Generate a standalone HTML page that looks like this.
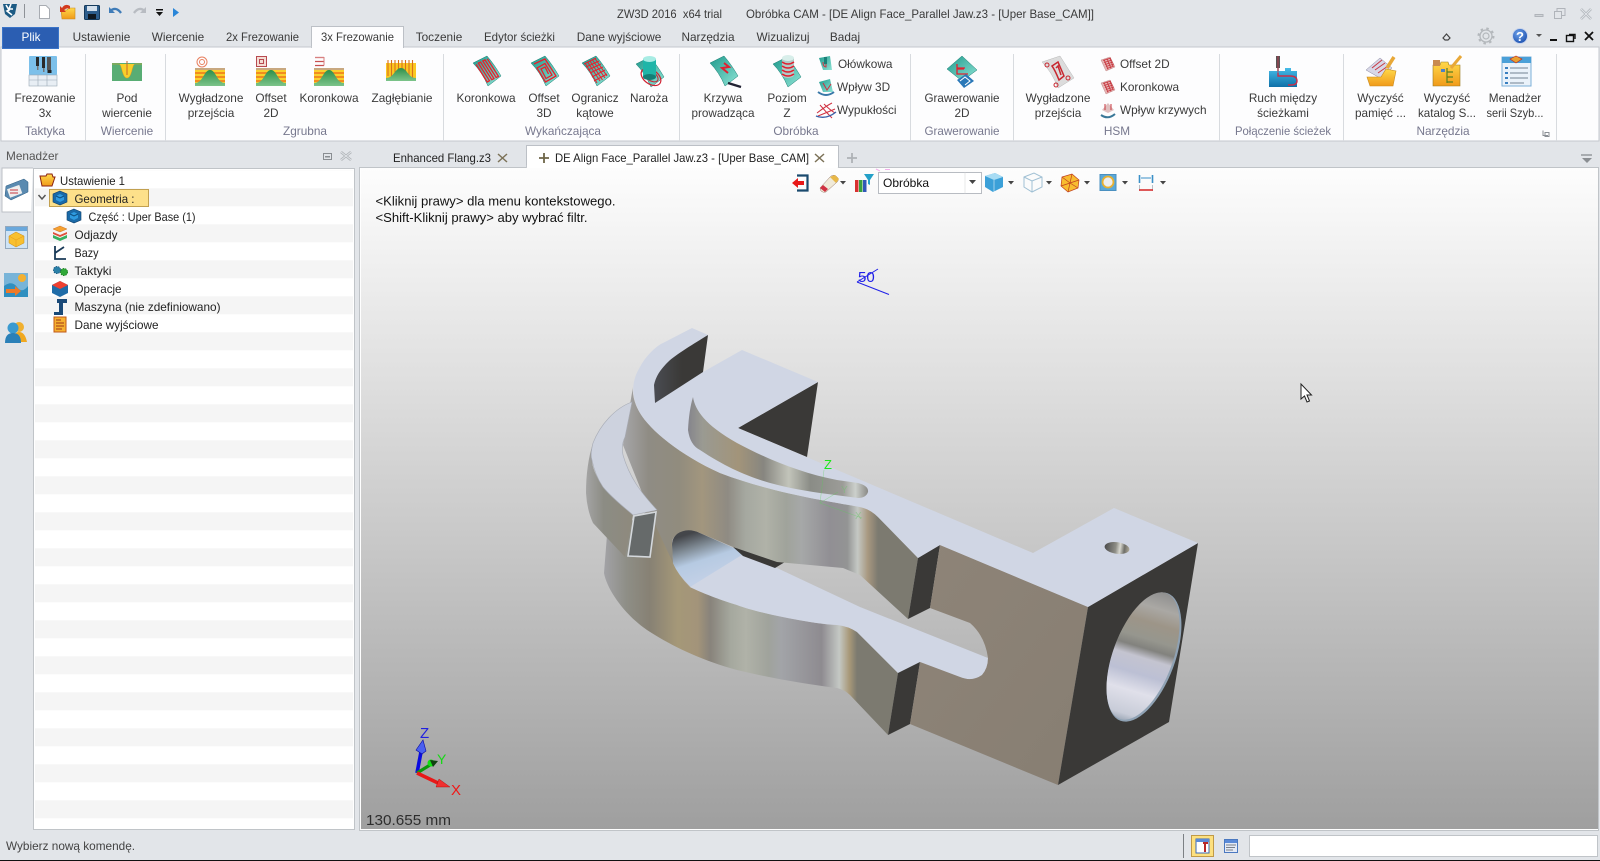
<!DOCTYPE html>
<html lang="pl"><head><meta charset="utf-8"><title>ZW3D 2016 x64 trial</title>
<style>
html,body{margin:0;padding:0;background:#e2e5e9;overflow:hidden}
svg{display:block}
text{font-family:"Liberation Sans",sans-serif;font-size:11.8px;fill:#3a3a3a}
.c{text-anchor:middle}
.g{fill:#77788e}
.k{fill:#222}
</style></head><body>
<svg width="1600" height="861" viewBox="0 0 1600 861" xmlns="http://www.w3.org/2000/svg">
<defs>
<linearGradient id="bg" x1="0" y1="0" x2="0" y2="1"><stop offset="0" stop-color="#fdfdfd"/><stop offset="1" stop-color="#9f9f9f"/></linearGradient>
<linearGradient id="up" gradientUnits="userSpaceOnUse" x1="623" y1="0" x2="878" y2="0">
<stop offset="0" stop-color="#a6a6a8"/><stop offset=".1" stop-color="#8f8c84"/><stop offset=".22" stop-color="#918c7e"/><stop offset=".31" stop-color="#a2967e"/><stop offset=".41" stop-color="#8f8b83"/><stop offset=".48" stop-color="#a5a8a0"/><stop offset=".56" stop-color="#b0b2a8"/><stop offset=".64" stop-color="#a0a39b"/><stop offset=".7" stop-color="#a6a8a8"/><stop offset=".81" stop-color="#918f94"/><stop offset=".88" stop-color="#939494"/><stop offset=".92" stop-color="#c4c8c4"/><stop offset=".96" stop-color="#a89880"/><stop offset="1" stop-color="#7c7a70"/></linearGradient>
<linearGradient id="lo" gradientUnits="userSpaceOnUse" x1="604" y1="0" x2="857" y2="0">
<stop offset="0" stop-color="#a2a2a6"/><stop offset=".09" stop-color="#8e8e86"/><stop offset=".18" stop-color="#878174"/><stop offset=".29" stop-color="#a59878"/><stop offset=".37" stop-color="#a3947a"/><stop offset=".42" stop-color="#88837b"/><stop offset=".5" stop-color="#a5a89e"/><stop offset=".56" stop-color="#b0b2a8"/><stop offset=".65" stop-color="#a0a39c"/><stop offset=".7" stop-color="#a2a4a8"/><stop offset=".86" stop-color="#8e8b90"/><stop offset=".93" stop-color="#c4c8c4"/><stop offset=".97" stop-color="#a89878"/><stop offset="1" stop-color="#7c7a70"/></linearGradient>
<linearGradient id="slot" gradientUnits="userSpaceOnUse" x1="688" y1="0" x2="868" y2="0">
<stop offset="0" stop-color="#85858c"/><stop offset=".08" stop-color="#9a9a92"/><stop offset=".28" stop-color="#a2947a"/><stop offset=".42" stop-color="#878680"/><stop offset=".56" stop-color="#c2c4ba"/><stop offset=".68" stop-color="#8a8c86"/><stop offset=".86" stop-color="#9c9c98"/><stop offset=".93" stop-color="#ccd0cc"/><stop offset="1" stop-color="#8a8a86"/></linearGradient>
<linearGradient id="holeg" x1=".3" y1=".05" x2=".6" y2=".8"><stop offset="0" stop-color="#44464a"/><stop offset=".3" stop-color="#7f8a94"/><stop offset=".6" stop-color="#b6cae2"/><stop offset="1" stop-color="#c2d0e6"/></linearGradient>
<linearGradient id="tan" x1="0" y1="0" x2="1" y2="1"><stop offset="0" stop-color="#8e8478"/><stop offset="1" stop-color="#877e72"/></linearGradient>
<linearGradient id="tabw" gradientUnits="userSpaceOnUse" x1="586" y1="0" x2="630" y2="0"><stop offset="0" stop-color="#a4a4a4"/><stop offset=".4" stop-color="#8c8c84"/><stop offset="1" stop-color="#8e8a7e"/></linearGradient>
<linearGradient id="big" gradientUnits="userSpaceOnUse" x1="1165" y1="592" x2="1125" y2="725">
<stop offset="0" stop-color="#8e8e8e"/><stop offset=".13" stop-color="#aaa8a4"/><stop offset=".24" stop-color="#9d9588"/><stop offset=".36" stop-color="#96968e"/><stop offset=".43" stop-color="#82827e"/><stop offset=".5" stop-color="#c4c4d0"/><stop offset=".62" stop-color="#bcc0d4"/><stop offset=".75" stop-color="#e0e0ea"/><stop offset=".92" stop-color="#c8ccd8"/><stop offset="1" stop-color="#8a98a8"/></linearGradient>
<linearGradient id="small" x1="0" y1="0" x2="1" y2="0"><stop offset="0" stop-color="#4c4c4c"/><stop offset=".45" stop-color="#8e8e86"/><stop offset=".62" stop-color="#d8d8d0"/><stop offset=".8" stop-color="#6e6e68"/><stop offset="1" stop-color="#b0aa98"/></linearGradient>
<linearGradient id="notch" gradientUnits="userSpaceOnUse" x1="654" y1="0" x2="682" y2="0"><stop offset="0" stop-color="#4a4c52"/><stop offset="1" stop-color="#3a3937"/></linearGradient>
<clipPath id="bigc"><ellipse cx="1143" cy="656" rx="30" ry="67" transform="rotate(20.3 1143 656)"/></clipPath>
<linearGradient id="gr" x1="0" y1="0" x2="0" y2="1"><stop offset="0" stop-color="#2f8f4a"/><stop offset="1" stop-color="#7cc48a"/></linearGradient>
<linearGradient id="teal" x1="0" y1="0" x2="1" y2="1"><stop offset="0" stop-color="#1f9a8c"/><stop offset="1" stop-color="#8fe4d6"/></linearGradient>
<linearGradient id="blue" x1="0" y1="0" x2="0" y2="1"><stop offset="0" stop-color="#46bce8"/><stop offset="1" stop-color="#0e70a8"/></linearGradient>
<linearGradient id="fold" x1="0" y1="0" x2="0" y2="1"><stop offset="0" stop-color="#ffd84a"/><stop offset="1" stop-color="#f09a1a"/></linearGradient>
<radialGradient id="help" cx=".4" cy=".35" r=".7"><stop offset="0" stop-color="#6fa2ea"/><stop offset="1" stop-color="#1b4fae"/></radialGradient>
<pattern id="stripes" patternUnits="userSpaceOnUse" x="35" y="188.3" width="318" height="36"><rect width="318" height="18" fill="#f5f5f5"/></pattern>

<symbol id="hill" viewBox="0 0 30 18" width="30" height="18" overflow="visible">
<rect width="30" height="18" fill="#fbd02c"/>
<rect width="30" height="2" fill="#c8a880"/><rect y="4" width="30" height="2" fill="#f28c1e"/><rect y="8" width="30" height="2" fill="#f28c1e"/><rect y="12" width="30" height="2" fill="#f28c1e"/>
<path d="M0 18V15C8 15 9 2 15 2S22 15 30 15V18Z" fill="url(#gr)"/></symbol>
<symbol id="sheet" viewBox="0 0 30 30" width="30" height="30" overflow="visible">
<path d="M1 7L15 0Q22 8 29 20L16 30Q10 16 1 7Z" fill="url(#teal)" stroke="#1a7d72" stroke-width=".5"/></symbol>
<symbol id="mini" viewBox="0 0 14 14" width="14" height="14" overflow="visible">
<path d="M0 3L9 0L14 10L5 14Z" fill="#e6b4b4" stroke="#b87a7a" stroke-width=".4"/><path d="M2 3.500L10 1M3 5.500L11 3M4 7.500L12 5M5 9.500L13 7M6 11.500L13 9M3 2.500L7 12.500M6 1.500L10 11.500M9 1L12 9.500" stroke="#c83840" stroke-width=".9" fill="none"/></symbol>
<symbol id="cubeb" viewBox="0 0 16 16" width="16" height="16" overflow="visible">
<path d="M8 1L15 4V12L8 15L1 12V4Z" fill="#1a6aa8" stroke="#0e3f6a" stroke-width=".6"/><path d="M8 4L12 6V10L8 12L4 10V6Z" fill="#2f9be0"/><path d="M4 6L8 8L12 6" fill="none" stroke="#0e4f80"/></symbol>
<symbol id="car" viewBox="0 0 6 4" width="6" height="4"><path d="M0 0H6L3 3.500Z" fill="#444"/></symbol>
</defs>

<rect width="1600" height="861" fill="#e2e5e9"/>

<!-- Quick access bar -->
<g>
<path d="M3 4H17L15 14L10 18L5 14Z" fill="#1d5b84"/><path d="M6 5L9 10L7 11L12 15M11 4L9 9L13 9" stroke="#fff" stroke-width="1.600" fill="none"/>
<rect x="24" y="4" width="1" height="14" fill="#8e9297"/>
<path d="M39.500 5.500H46L49.500 9V18.500H39.500Z" fill="#fff" stroke="#a8acb2"/>
<path d="M61 10H67L69 8H75V19H62Z" fill="url(#fold)" stroke="#c78a20" stroke-width=".6"/><path d="M70 6Q65 3 62 8L60 6V12H66L64 10Q67 7 70 9Z" fill="#d23a1e"/>
<rect x="84.500" y="5.500" width="15" height="14" rx="1" fill="#2d5d8c" stroke="#153a5c"/><rect x="87" y="6" width="10" height="5" fill="#d4e0ec"/><rect x="88" y="14" width="8" height="5" fill="#101820"/>
<path d="M110 11Q116 6 121 13" fill="none" stroke="#3f7cb8" stroke-width="2.400"/><path d="M109 7V13H115Z" fill="#3f7cb8"/>
<path d="M145 11Q139 6 134 13" fill="none" stroke="#b8bcc2" stroke-width="2.400"/><path d="M146 7V13H140Z" fill="#b8bcc2"/>
<rect x="156" y="9" width="7" height="1.500" fill="#111"/><path d="M156 12H163L159.500 16Z" fill="#111"/>
<path d="M173 8L179 12.500L173 17Z" fill="#2a86d8"/>
</g>

<!-- Title -->
<text x="617" y="18" textLength="105" lengthAdjust="spacingAndGlyphs" xml:space="preserve">ZW3D 2016  x64 trial</text>
<text x="746" y="18" textLength="348" lengthAdjust="spacingAndGlyphs">Obróbka CAM - [DE Align Face_Parallel Jaw.z3 - [Uper Base_CAM]]</text>
<g fill="none" stroke="#b0b4ba">
<path d="M1535 14.500H1543V16.500H1535Z" fill="#d0d4d8"/>
<rect x="1554.500" y="11.500" width="7" height="7"/><path d="M1557 11V8.500H1565V15.500H1562"/>
<path d="M1581 9L1591 19M1591 9L1581 19" stroke-width="2.600"/><path d="M1581 9L1591 19M1591 9L1581 19" stroke="#e2e5e9" stroke-width="1"/>
</g>

<!-- Tabs -->
<rect x="1" y="47" width="1598" height="94" fill="#fdfdfe" stroke="#c4c8cd"/>
<path d="M311.500 48V26.500H403.500V48" fill="#fdfdfe" stroke="#bcc0c6"/>
<rect x="311.900" y="46" width="91" height="4" fill="#fdfdfe"/>
<rect x="2.500" y="27.500" width="56" height="21" fill="#2b5eb2" stroke="#3a74c8"/>
<text x="31" y="41" class="c" style="fill:#fff">Plik</text>
<text x="101.500" y="41" class="c">Ustawienie</text>
<text x="178" y="41" class="c">Wiercenie</text>
<text x="262.500" y="41" class="c" textLength="73" lengthAdjust="spacingAndGlyphs">2x Frezowanie</text>
<text x="357.500" y="41" class="c" textLength="73" lengthAdjust="spacingAndGlyphs">3x Frezowanie</text>
<text x="439" y="41" class="c">Toczenie</text>
<text x="519.500" y="41" class="c" textLength="71" lengthAdjust="spacingAndGlyphs">Edytor ścieżki</text>
<text x="619" y="41" class="c">Dane wyjściowe</text>
<text x="708" y="41" class="c">Narzędzia</text>
<text x="783" y="41" class="c">Wizualizuj</text>
<text x="845" y="41" class="c">Badaj</text>

<!-- Right tab-row icons -->
<path d="M1443 38L1446.500 34L1450 38L1448 40H1445Z" fill="none" stroke="#444" stroke-width="1.200"/>
<circle cx="1486" cy="36" r="3" fill="none" stroke="#b4b8bc" stroke-width="1.200"/><circle cx="1486" cy="36" r="6" fill="none" stroke="#b4b8bc" stroke-width="1.300"/><circle cx="1486" cy="36" r="7.500" fill="none" stroke="#b4b8bc" stroke-width="2" stroke-dasharray="2.500 3.400"/>
<circle cx="1520" cy="36" r="7.500" fill="url(#help)" stroke="#c8d4ec"/><text x="1520" y="41" class="c" style="fill:#fff;font-size:13px;font-weight:bold">?</text>
<path d="M1536 34H1542L1539 37Z" fill="#555"/>
<rect x="1550" y="39" width="7" height="2" fill="#111"/>
<rect x="1566.500" y="35.500" width="7" height="6" fill="none" stroke="#111" stroke-width="1.400"/><path d="M1569 34.500H1575V39" fill="none" stroke="#111" stroke-width="1.400"/>
<path d="M1585 32L1593 40M1593 32L1585 40" stroke="#111" stroke-width="1.800"/>

<!-- Ribbon separators -->
<g fill="#d8dbdf">
<rect x="85" y="54" width="1" height="87"/><rect x="165" y="54" width="1" height="87"/><rect x="443" y="54" width="1" height="87"/><rect x="679" y="54" width="1" height="87"/><rect x="910" y="54" width="1" height="87"/><rect x="1013" y="54" width="1" height="87"/><rect x="1219" y="54" width="1" height="87"/><rect x="1343" y="54" width="1" height="87"/><rect x="1556" y="54" width="1" height="87"/>
</g>

<!-- Ribbon icons: group 1-3 -->
<g>
<rect x="29" y="56" width="28" height="19" rx="1" fill="#7cc0ea"/><rect x="29" y="75" width="28" height="11" fill="#e8eef4" stroke="#9aa8b4" stroke-width=".6"/><path d="M38 75V86M47 75V86M29 80H57" stroke="#9aa8b4" stroke-width=".6"/>
<rect x="36" y="57" width="3" height="9" fill="#2a2a2a"/><rect x="37" y="66" width="1.500" height="4" fill="#777"/><rect x="42" y="57" width="3" height="11" fill="#2a2a2a"/><rect x="43" y="68" width="1.500" height="4" fill="#777"/><rect x="47" y="57" width="4" height="13" fill="#555"/><rect x="47.500" y="70" width="4" height="3" fill="#222"/>

<rect x="112" y="63" width="30" height="18" fill="#58ad74"/><path d="M112 64H119C122 64 122 78 127 78S132 64 135 64H142" fill="#f8cf2a" stroke="#e8a020" stroke-width=".5"/><rect x="126.500" y="61" width="1" height="14" fill="#c86828"/>

<use href="#hill" x="195" y="68"/><circle cx="202" cy="62" r="5" fill="none" stroke="#e88060" stroke-width="1"/><circle cx="202" cy="62" r="2.500" fill="none" stroke="#e88060" stroke-width="1"/>
<use href="#hill" x="256" y="68"/><rect x="256.500" y="56.500" width="10" height="10" fill="#f4dcd4" stroke="#b84a50"/><rect x="259.500" y="59.500" width="4" height="4" fill="none" stroke="#b84a50"/>
<use href="#hill" x="314" y="68"/><path d="M315 57.500H324M315 61.500H324M315 65.500H324" stroke="#c85050" stroke-width="1.300"/><path d="M315 57.500H324V65.500" fill="none" stroke="#d88080"/>
<rect x="386" y="63" width="30" height="18" fill="#fbc822"/><g stroke="#d8701c" stroke-width="1.100"><path d="M388 60V76M391.500 60V77M395 60V74M398.500 60V72M402 60V72M405.500 60V74M409 60V77M412.500 60V78"/></g><path d="M386 81V78C394 78 395 68 401 68S408 78 416 78V81Z" fill="url(#gr)"/>
</g>

<!-- Finishing icons -->
<g>
<use href="#sheet" x="472" y="56"/><polyline transform="translate(472 56)" points="4.100,8.400 15.300,26 17.500,24.800 6.300,7.200 8.600,6.100 19.800,23.700 22,22.600 10.800,5 13,3.900 24.200,21.500 26.500,20.400 15.300,2.800" fill="none" stroke="#e8202c" stroke-width="1.300"/>
<use href="#sheet" x="530" y="56"/><path transform="translate(530 56)" d="M4 8L15 3L26 20L15.500 26L7 12L15 7.500L22 19L16 22.500L11 13L15 11L18.500 18" fill="none" stroke="#e8202c" stroke-width="1.300"/>
<use href="#sheet" x="581" y="56"/><path transform="translate(581 56)" d="M4 7L16 27M6.500 6L19 25M9 5L21.500 24M11.500 4L24 22M14 2.500L26 20M3 8L15 2M5 11L18 5M7 14L20 8M9 17L22 11M11 21L24 14M13 25L26 18" fill="none" stroke="#e8202c" stroke-width="1"/>
<use href="#sheet" x="635" y="57"/><ellipse cx="651" cy="77" rx="11" ry="7" fill="none" stroke="#d02030" stroke-width="1.200" transform="rotate(35 651 77)"/><ellipse cx="651" cy="76" rx="8" ry="4.500" fill="none" stroke="#d02030" stroke-width="1" transform="rotate(35 651 76)"/><rect x="643" y="59" width="13" height="18" fill="#1fb5a8"/><ellipse cx="649.500" cy="59" rx="6.500" ry="3" fill="#a8ece4"/><ellipse cx="649.500" cy="77" rx="6.500" ry="3" fill="#147f76"/>

<use href="#sheet" x="709" y="56"/><path d="M724 63L729 67L722 68L728 73" stroke="#e02030" stroke-width="2" fill="none"/><path d="M728 83L741 87" stroke="#223" stroke-width="2.400"/>
<use href="#sheet" x="772" y="57"/><rect x="782" y="58" width="12" height="17" fill="#b0ccc8"/><ellipse cx="788" cy="58" rx="6" ry="3" fill="#d8eeea"/><ellipse cx="788" cy="75" rx="6" ry="3" fill="#b0ccc8"/><path d="M782 62Q788 66 794 62M782 66Q788 70 794 66M782 70Q788 74 794 70M782 74Q788 78 794 74" fill="none" stroke="#e02030" stroke-width="1.500"/>
<path d="M819 58L830 56L832 70L823 70Z" fill="url(#teal)"/><path d="M826 60V67Q823 67 823 62" stroke="#d03040" fill="none"/><rect x="824" y="57" width="3" height="7" fill="#1a8078"/>
<path d="M819 82L830 79L833 92L823 92Z" fill="url(#teal)"/><path d="M823 83L827 90L831 84" stroke="#d03040" fill="none"/><path d="M818 92Q826 98 834 92" stroke="#3a78a8" stroke-width="2" fill="none"/>
<path d="M817 113Q826 106 832 103M818 116Q828 112 835 109M820 105Q826 112 832 118M824 104Q830 110 835 113" stroke="#d03040" fill="none"/><path d="M816 116Q826 120 836 112" stroke="#3a60a8" stroke-width="1.400" fill="none"/>

<path d="M962 56L977 70L962 81L947 69Z" fill="url(#teal)" stroke="#1a7d72" stroke-width=".5"/><path d="M957 68H965M957 64V74H968M957 69H964" stroke="#e02030" stroke-width="1.300" fill="none"/><path d="M957 80L966 74L974 81L964 88Z" fill="#2a78b8"/><path d="M960 81L965 77L970 81L965 85" stroke="#fff" fill="none"/>
</g>

<!-- HSM and others -->
<g>
<path d="M1042 62L1060 56L1074 78L1058 88Q1052 72 1042 62Z" fill="#dcdcdc" stroke="#b8b8b8" stroke-width=".5"/><path d="M1052 66L1058 62L1064 76L1059 80Q1055 70 1052 66ZM1056 68L1058 66L1061 75" fill="none" stroke="#c82830" stroke-width="1.500"/><circle cx="1047" cy="65" r="2" fill="none" stroke="#c82830"/><circle cx="1068" cy="78" r="2" fill="none" stroke="#c82830"/><circle cx="1056" cy="85" r="2" fill="none" stroke="#c82830"/>
<use href="#mini" x="1101" y="57"/><use href="#mini" x="1101" y="80"/>
<path d="M1102 110L1108 103L1114 110L1108 113Z" fill="#e0c0c0"/><path d="M1105 104V110M1111 104V110" stroke="#c83840"/><path d="M1101 115Q1108 120 1115 114" stroke="#3a7898" stroke-width="2" fill="none"/>

<rect x="1276" y="56" width="4" height="12" fill="#555"/><rect x="1277" y="68" width="2" height="5" fill="#aaa"/>
<path d="M1269 71H1285V68H1291V71H1297V87H1269Z" fill="url(#blue)"/><path d="M1278 73V76H1290Q1297 76 1297 81Q1297 85 1291 85H1288" stroke="#c8304a" stroke-width="1.400" fill="none"/><path d="M1278 56V76" stroke="#c8304a" stroke-width=".8"/>

<path d="M1366 70L1380 58L1392 68L1380 78Z" fill="#d8d8e8" stroke="#8888a0" stroke-width=".5"/><path d="M1372 68L1382 60M1375 70L1385 63M1378 73L1388 66" stroke="#c83840"/><path d="M1387 68L1394 57" stroke="#e8a838" stroke-width="3.500"/><path d="M1367 77H1381L1386 69L1396 71L1393 86H1370Z" fill="url(#fold)" stroke="#c78a20" stroke-width=".6"/>
<path d="M1433 65H1440L1441 62H1448L1449 65H1460V86H1433Z" fill="url(#fold)" stroke="#9a7a20" stroke-width=".6"/><rect x="1433" y="60" width="7" height="6" fill="#c88a50"/><path d="M1451 68L1461 56" stroke="#e8a838" stroke-width="3"/><path d="M1447 68V83M1447 72H1453M1447 77H1453M1447 82H1453" stroke="#5a8020" stroke-width="1.200" fill="none"/><rect x="1441" y="69" width="4" height="3" fill="#4a80c8"/>
<rect x="1502" y="57" width="29" height="29" fill="#eaf2fa" stroke="#7cb0d8"/><rect x="1502" y="57" width="29" height="6" fill="#4aa0d8"/><path d="M1510 59L1516 56L1522 59L1516 63Z" fill="#e8a030" stroke="#c02820" stroke-width=".6"/><path d="M1505 68H1508M1505 73H1508M1505 78H1508M1505 83H1508" stroke="#3a80c0" stroke-width="2"/><path d="M1510 68H1528M1510 73H1528M1510 78H1528M1510 83H1524" stroke="#8a98a8" stroke-width="1.200"/>
<path d="M1543 130.500V135.500H1548M1545 132.500H1549V136.500H1545Z" fill="none" stroke="#8a8e94"/>
</g>

<!-- Ribbon text -->
<g>
<text x="45" y="102" class="c">Frezowanie</text><text x="45" y="117" class="c">3x</text><text x="45" y="135" class="c g">Taktyka</text>
<text x="127" y="102" class="c">Pod</text><text x="127" y="117" class="c">wiercenie</text><text x="127" y="135" class="c g">Wiercenie</text>
<text x="211" y="102" class="c">Wygładzone</text><text x="211" y="117" class="c">przejścia</text>
<text x="271" y="102" class="c">Offset</text><text x="271" y="117" class="c">2D</text>
<text x="329" y="102" class="c">Koronkowa</text>
<text x="402" y="102" class="c">Zagłębianie</text><text x="305" y="135" class="c g">Zgrubna</text>
<text x="486" y="102" class="c">Koronkowa</text>
<text x="544" y="102" class="c">Offset</text><text x="544" y="117" class="c">3D</text>
<text x="595" y="102" class="c">Ogranicz</text><text x="595" y="117" class="c">kątowe</text>
<text x="649" y="102" class="c">Naroża</text><text x="563" y="135" class="c g">Wykańczająca</text>
<text x="723" y="102" class="c">Krzywa</text><text x="723" y="117" class="c" textLength="63" lengthAdjust="spacingAndGlyphs">prowadząca</text>
<text x="787" y="102" class="c">Poziom</text><text x="787" y="117" class="c">Z</text>
<text x="838" y="68">Ołówkowa</text><text x="837" y="91">Wpływ 3D</text><text x="837" y="114">Wypukłości</text>
<text x="796" y="135" class="c g">Obróbka</text>
<text x="962" y="102" class="c" textLength="75" lengthAdjust="spacingAndGlyphs">Grawerowanie</text><text x="962" y="117" class="c">2D</text><text x="962" y="135" class="c g" textLength="75" lengthAdjust="spacingAndGlyphs">Grawerowanie</text>
<text x="1058" y="102" class="c">Wygładzone</text><text x="1058" y="117" class="c">przejścia</text>
<text x="1120" y="68">Offset 2D</text><text x="1120" y="91">Koronkowa</text><text x="1120" y="114">Wpływ krzywych</text>
<text x="1117" y="135" class="c g">HSM</text>
<text x="1283" y="102" class="c">Ruch między</text><text x="1283" y="117" class="c">ścieżkami</text><text x="1283" y="135" class="c g" textLength="96" lengthAdjust="spacingAndGlyphs">Połączenie ścieżek</text>
<text x="1380.500" y="102" class="c">Wyczyść</text><text x="1380.500" y="117" class="c" textLength="51" lengthAdjust="spacingAndGlyphs">pamięć ...</text>
<text x="1447" y="102" class="c">Wyczyść</text><text x="1447" y="117" class="c" textLength="58" lengthAdjust="spacingAndGlyphs">katalog S...</text>
<text x="1515" y="102" class="c">Menadżer</text><text x="1515" y="117" class="c" textLength="57" lengthAdjust="spacingAndGlyphs">serii Szyb...</text>
<text x="1443" y="135" class="c g">Narzędzia</text>
</g>

<!-- Panel header -->
<text x="6" y="160" style="fill:#555">Menadżer</text>
<rect x="323.500" y="153.500" width="8" height="6" fill="none" stroke="#8a8e92"/><rect x="325" y="156" width="5" height="1.500" fill="#8a8e92"/>
<path d="M341 152L351 160M351 152L341 160" stroke="#b0b4b8" stroke-width="2.600"/><path d="M341 152L351 160M351 152L341 160" stroke="#e2e5e9" stroke-width=".9"/>

<!-- Document tabs -->
<text x="393" y="162" class="k" textLength="98" lengthAdjust="spacingAndGlyphs">Enhanced Flang.z3</text>
<path d="M498 154L507 162M507 154L498 162" stroke="#7c7258" stroke-width="1.500"/>
<path d="M526.500 168V145.500H838.500V168" fill="#fff" stroke="#bcc0c6"/>
<path d="M544 153V163M539 158H549" stroke="#6e6648" stroke-width="1.800"/>
<text x="555" y="162" class="k" textLength="254" lengthAdjust="spacingAndGlyphs">DE Align Face_Parallel Jaw.z3 - [Uper Base_CAM]</text>
<path d="M815 154L824 162M824 154L815 162" stroke="#7c7258" stroke-width="1.500"/>
<path d="M852 153V163M847 158H857" stroke="#aeb2b6" stroke-width="1.800"/>
<path d="M1581 155H1592" stroke="#8a8e92" stroke-width="1.300"/><path d="M1582 158H1592L1587 163Z" fill="#8a8e92"/>

<!-- Left vertical tabs -->
<path d="M31 212H2V168H33" fill="#fff" stroke="#bcc0c6"/>
<path d="M6 186L24 179L28 182V192L11 200L5 196Z" fill="#5a8ab0" stroke="#2a5a80" stroke-width=".5"/><rect x="8" y="187" width="13" height="9" fill="#eee" transform="rotate(-20 14 191)"/><path d="M10 190H18M10 193H18" stroke="#c83840"/>
<rect x="5.500" y="226.500" width="22" height="22" fill="#cfe4f6" stroke="#94a8bc"/><rect x="6" y="227" width="21" height="4" fill="#6aa8dc"/><path d="M16 232L24 236V243L16 247L9 243V236Z" fill="#f8c030" stroke="#c88a18" stroke-width=".5"/><path d="M9 236L16 240L24 236M16 240V247" fill="none" stroke="#e8a020" stroke-width=".6"/>
<rect x="4" y="273" width="24" height="24" fill="#78b4d8"/><circle cx="22" cy="278" r="4" fill="#f4b030"/><path d="M4 297V286Q12 280 17 287T28 286V297Z" fill="#2f8fc0"/><path d="M6 289H15V286L21 291L15 296V293H6Z" fill="#ee7a28"/>
<circle cx="19" cy="327" r="5" fill="#f0b030"/><path d="M13 342Q13 332 19 332T27 342Z" fill="#f0a820"/><circle cx="13" cy="328" r="5.500" fill="#3a9ad0"/><path d="M5 343Q5 333 13 333T21 343Z" fill="#2a80b8"/>

<!-- Tree panel -->
<rect x="33.500" y="168.500" width="321" height="661" fill="#fff" stroke="#c0c4c8"/>
<rect x="35" y="170" width="318" height="658" fill="url(#stripes)"/>

<g>
<path d="M40 176H46L47 174H52L53 177H55L52 186H42Z" fill="url(#fold)" stroke="#8a2010" stroke-width="1"/>
<text x="60" y="185" class="k" textLength="65" lengthAdjust="spacingAndGlyphs">Ustawienie 1</text>
<path d="M38.500 195L42 199L45.500 195" fill="none" stroke="#555" stroke-width="1.500"/>
<rect x="49.500" y="189.500" width="99" height="17" fill="#fde08a" stroke="#c2a050"/>
<use href="#cubeb" x="52" y="190"/>
<text x="74.500" y="203" class="k" textLength="60" lengthAdjust="spacingAndGlyphs">Geometria :</text>
<use href="#cubeb" x="66" y="208"/>
<text x="88.500" y="221" class="k" textLength="107" lengthAdjust="spacingAndGlyphs">Część : Uper Base (1)</text>
<path d="M53 229L60 226L67 229L60 232Z" fill="#f5a030" stroke="#c06010" stroke-width=".4"/><path d="M53 232L60 235L67 232L67 234L60 237L53 234Z" fill="#e0503a"/><path d="M53 235L60 238L67 235L67 238L60 241L53 238Z" fill="#38b060"/>
<text x="74.500" y="239" class="k" textLength="43" lengthAdjust="spacingAndGlyphs">Odjazdy</text>
<path d="M55 246V259L66 259M55 253L64 247" fill="none" stroke="#1a3a58" stroke-width="1.800"/>
<text x="74.500" y="257" class="k" textLength="24" lengthAdjust="spacingAndGlyphs">Bazy</text>
<circle cx="57" cy="270" r="3.500" fill="#2a80a8" stroke="#1a5a80" stroke-dasharray="1.500 1"/><circle cx="64" cy="272" r="3.500" fill="#30a838" stroke="#1a8020" stroke-dasharray="1.500 1"/>
<text x="74.500" y="275" class="k" textLength="37" lengthAdjust="spacingAndGlyphs">Taktyki</text>
<path d="M60 281L68 285V293L60 297L52 293V285Z" fill="#1f6ca8"/><path d="M60 281L68 285L60 289L52 285Z" fill="#f04030"/>
<text x="74.500" y="293" class="k" textLength="47" lengthAdjust="spacingAndGlyphs">Operacje</text>
<path d="M57 299H67V303H63V315H54V312H59V303H57Z" fill="#1a4a78"/>
<text x="74.500" y="311" class="k" textLength="146" lengthAdjust="spacingAndGlyphs">Maszyna (nie zdefiniowano)</text>
<rect x="54" y="317" width="12" height="15" fill="#f6b030" stroke="#c05818" stroke-width="1"/><path d="M56 320H61M56 323H64M56 326H64M56 329H62" stroke="#a03818" stroke-width="1"/>
<text x="74.500" y="329" class="k" textLength="84" lengthAdjust="spacingAndGlyphs">Dane wyjściowe</text>
</g>

<!-- Viewport -->
<rect x="359.500" y="167.500" width="1239" height="663" fill="#fff" stroke="#c0c4c8"/>
<rect x="361" y="168" width="1237" height="661" fill="url(#bg)"/>
<rect x="526.900" y="165" width="311" height="3" fill="#fff"/>
<path d="M876 169L880 171M885 169.500H890" stroke="#f2b0ec" stroke-width="1"/>

<!-- Viewport toolbar -->
<g>
<path d="M797 175.500H807.500V190.500H797" fill="none" stroke="#1a4a6e" stroke-width="2.200"/><path d="M792 183L798 178V181H804V185H798V188Z" fill="#e81818"/>
<path d="M820 188L830 177Q833 174 836 176L838 178Q839 181 836 183L826 192Q823 193 821 191Z" fill="#f0ead8" stroke="#9a7a6a" stroke-width=".5"/><path d="M830 177L836 183L839 179L835 175Z" fill="#e8b848"/><path d="M820 188L825 192L828 189L823 185Z" fill="#d03040"/>
<use href="#car" x="840" y="181"/>
<rect x="855" y="180" width="3.500" height="12" fill="#d83030"/><rect x="859" y="180" width="3.500" height="12" fill="#38a040"/><rect x="863" y="180" width="3.500" height="12" fill="#3058b8"/><path d="M864 174H874L870 180V185L868 184V180Z" fill="#24a0c8"/>
<rect x="878.500" y="172.500" width="103" height="21" fill="#fff" stroke="#b8bcc2"/><path d="M965 172.500V193.500" stroke="#d8dadc" stroke-width=".6"/>
<text x="883" y="187" class="k" style="fill:#111;font-size:12px">Obróbka</text>
<path d="M969 180H976L972.500 184Z" fill="#444"/>
<path d="M985 176L995 173L1003 177V187L993 192L985 187Z" fill="#3ba0d8"/><path d="M985 176L994 180L1003 177L995 173Z" fill="#a8dcf4"/><path d="M994 180V192" stroke="#fff" stroke-width=".5"/><use href="#car" x="1008" y="181"/>
<path d="M1024 177L1034 173L1042 177V187L1032 192L1024 187ZM1024 177L1032 181L1042 177M1032 181V192" fill="#fbfbfb" stroke="#a0c0d4"/><use href="#car" x="1046" y="181"/>
<path d="M1062 177L1072 174L1079 180L1078 188L1068 192L1061 186Z" fill="#f8bc30" stroke="#c04020" stroke-width=".7"/><path d="M1070 183L1072 174M1070 183L1079 180M1070 183L1078 188M1070 183L1068 192M1070 183L1061 186M1070 183L1062 177" stroke="#c04020" stroke-width=".7"/><use href="#car" x="1084" y="181"/>
<rect x="1100" y="174.500" width="16" height="16" fill="#5aa8d8" stroke="#4a90c0"/><circle cx="1108" cy="182" r="5.500" fill="#eee" stroke="#e8b030" stroke-width="1.800"/><use href="#car" x="1122" y="181"/>
<path d="M1139.500 175V183M1152.500 175V183" stroke="#3a90c8" stroke-width="1.600"/><path d="M1141 178H1151" stroke="#3a90c8"/><path d="M1139.500 185V191M1152.500 185V191" stroke="#b8c0c8"/><path d="M1139 190H1153" stroke="#d83030" stroke-width="1.600"/><use href="#car" x="1160" y="181"/>
</g>

<text x="375.500" y="205.500" class="k" style="fill:#111;font-size:13px" textLength="240" lengthAdjust="spacingAndGlyphs">&lt;Kliknij prawy&gt; dla menu kontekstowego.</text>
<text x="375.500" y="222" class="k" style="fill:#111;font-size:13px" textLength="212" lengthAdjust="spacingAndGlyphs">&lt;Shift-Kliknij prawy&gt; aby wybrać filtr.</text>

<text x="858" y="282" style="fill:#2020e8;font-size:15px">50</text>
<path d="M857 282L889 294.500M857 282L878 269" stroke="#2020e8" fill="none"/>

<!-- 3D part -->
<g>
<path d="M607 535L604 573C607 590 625 615 647 630C670 645 700 660 737 670C770 678 805 684 837 688Q845 690 850 695L888 735L898 673L857 632Q848 626 837 625C820 625 760 614 737 605C720 600 700 592 690 587Q678 575 673 563L672 540L650 510Z" fill="url(#lo)"/>
<path d="M672 545Q672 537 680 531Q688 527 700 533L745 553L692 588Q678 575 673 563Z" fill="url(#holeg)"/>
<path d="M690 587C700 592 720 600 737 605C760 614 820 625 837 625Q848 626 857 632L898 673L920 662L960 677Q972 682 982 675Q988 668 988 658L860 607L777 568L745 553Z" fill="#d0d6e4"/>
<path d="M733 547L743 556L775 568L785 562L777 558Z" fill="#3a3937"/>
<path d="M633 387C632 395 635 405 640 413C650 430 680 455 720 473C770 492 820 500 860 507Q870 509 878 517L918 558L908 619L860 575L843 568L777 562L733 547L700 533Q687 527 677 534Q670 540 672 548L673 563L653 520L623 445Z" fill="url(#up)"/>
<path d="M918 558L940 545L930 608L908 619Z" fill="#3a3937"/>
<path d="M898 673L920 662L910 724L888 735Z" fill="#3a3937"/>
<path d="M940 545L1088 607L1058 785L910 724L920 662L960 677Q972 682 982 675Q988 668 988 658Q985 636 970 623L930 608Z" fill="url(#tan)"/>
<path d="M1088 607L1198 543L1169 722L1058 785Z" fill="#3a3937"/>
<path d="M818 382L738 428L807 457Z" fill="#3a3937"/>
<path d="M692 328L708 335L703 372L742 350L818 382L738 428L1033 553L1114 508L1198 543L1088 607L940 545L918 558L878 517Q870 509 860 507C820 500 770 492 720 473C680 455 650 430 640 413C630 395 632 380 640 367C648 352 660 344 663 343Z" fill="#d0d6e4"/>
<path d="M708 335L703 372L655 403L654 385C656 375 662 368 668 362C675 355 695 343 708 335Z" fill="url(#notch)"/>
<path d="M693 397C695 410 705 425 737 443C765 458 800 473 837 480L858 483Q869 486 868 492Q866 498 858 498L820 493C780 487 745 480 700 450Q690 445 688 430Q689 410 693 397Z" fill="url(#slot)"/>
<path d="M593 443Q586 465 586 493Q587 510 593 523L625 557L633 515L603 487Q592 470 592 460Z" fill="url(#tabw)"/>
<path d="M632 402C615 408 600 425 593 443Q590 455 592 460Q595 475 603 487C612 498 625 508 633 515L657 510C645 497 630 480 623 455Q621 445 625 437Z" fill="#cdd2de" stroke="#a8acb6" stroke-width=".6"/>
<path d="M634 516L656 512L650 557L628 556Z" fill="#666a6a" stroke="#d4d8dc" stroke-width="1.600"/>
<ellipse cx="1117" cy="548" rx="12.500" ry="5.800" fill="url(#small)" transform="rotate(8 1117 548)"/>
<ellipse cx="1144" cy="657" rx="31" ry="68" fill="#8fa2b4" transform="rotate(20.3 1144 657)"/>
<rect x="1100" y="585" width="90" height="145" fill="url(#big)" clip-path="url(#bigc)"/>
<g fill="none" stroke="#58d058" stroke-width=".6" opacity=".45">
<path d="M824 470L820 503L862 518M820 503L838 492"/>
</g>
<text x="824" y="469" style="fill:#18e818;font-size:13px">Z</text>
<text x="841" y="493" style="fill:#70c070;font-size:10px;opacity:.5">Y</text>
<text x="855" y="519" style="fill:#70c070;font-size:10px;opacity:.5">X</text>
</g>

<!-- Triad -->
<g>
<path d="M417 773L421 752" stroke="#0a0ae0" stroke-width="3.600"/><path d="M423 740L426 751L422 754L416 750Z" fill="#4a60f0" stroke="#0a0aa0" stroke-width=".6"/>
<path d="M417 773L430 765" stroke="#0a9a0a" stroke-width="3.200"/><circle cx="431" cy="763" r="3.500" fill="#10e010"/><path d="M430 760L438 761L433 767Z" fill="#104010"/>
<path d="M417 773L438 783" stroke="#e81818" stroke-width="3.600"/><path d="M450 787L436 787L439 779Z" fill="#f03030" stroke="#a00" stroke-width=".4"/>
<text x="420" y="738" style="fill:#2020e0;font-size:15px">Z</text>
<text x="437" y="764" style="fill:#18d818;font-size:14px">Y</text>
<text x="451" y="795" style="fill:#f01818;font-size:15px">X</text>
</g>
<text x="366" y="825" textLength="85" lengthAdjust="spacingAndGlyphs" style="font-size:15px;fill:#2e2e2e">130.655 mm</text>

<!-- Cursor -->
<path d="M1301 384V399L1304.500 396L1307 402L1309.500 401L1307 395H1311.500Z" fill="#fff" stroke="#222" stroke-width="1"/>

<!-- Status bar -->
<text x="6" y="850" style="fill:#444">Wybierz nową komendę.</text>
<rect x="1183" y="834" width="1" height="24" fill="#7c8084"/>
<rect x="1191.500" y="835.500" width="22" height="21" fill="#fde07e" stroke="#c09a48"/>
<rect x="1196" y="839" width="13" height="14" fill="#fff" stroke="#3a6ab8"/><rect x="1196" y="839" width="13" height="3" fill="#5a8ad8"/><path d="M1203 843H1208M1205 843V852" stroke="#b82828" stroke-width="2"/>
<rect x="1224.500" y="839.500" width="13" height="13" fill="#e4eaf6" stroke="#4a78c0"/><rect x="1225" y="840" width="12" height="3" fill="#5a8ad8"/><path d="M1226 845H1236M1226 847.500H1235M1226 850H1233" stroke="#7a8088"/>
<rect x="1249.500" y="835.500" width="348" height="21" fill="#fff" stroke="#c0c4c8"/>
<rect x="0" y="860" width="1600" height="1" fill="#111"/>
</svg>
</body></html>
